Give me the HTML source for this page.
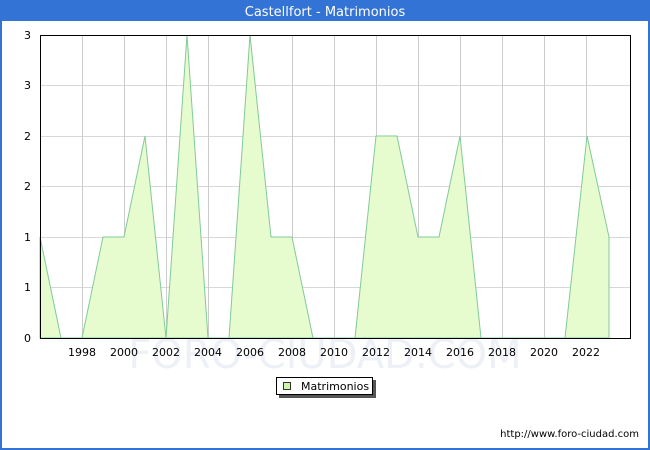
<!DOCTYPE html>
<html><head><meta charset="utf-8"><style>
html,body{margin:0;padding:0;width:650px;height:450px;overflow:hidden;background:#fff}
svg{display:block;font-family:"DejaVu Sans","Liberation Sans",sans-serif}
</style></head><body>
<svg width="650" height="450" viewBox="0 0 650 450" xmlns="http://www.w3.org/2000/svg">
<rect x="0" y="0" width="650" height="450" fill="#3373d5"/>
<rect x="2" y="21" width="646" height="427" fill="#fff"/>
<text x="325" y="16" fill="#fff" font-size="13" text-anchor="middle">Castellfort - Matrimonios</text>
<g stroke="#d8d8d8" stroke-width="1">
<line x1="40" y1="85.5" x2="630" y2="85.5"/>
<line x1="40" y1="136.5" x2="630" y2="136.5"/>
<line x1="40" y1="186.5" x2="630" y2="186.5"/>
<line x1="40" y1="237.5" x2="630" y2="237.5"/>
<line x1="40" y1="287.5" x2="630" y2="287.5"/>
</g>
<g stroke="#cccccc" stroke-width="1">
<line x1="82.5" y1="35" x2="82.5" y2="338"/><line x1="124.5" y1="35" x2="124.5" y2="338"/>
<line x1="166.5" y1="35" x2="166.5" y2="338"/><line x1="208.5" y1="35" x2="208.5" y2="338"/>
<line x1="250.5" y1="35" x2="250.5" y2="338"/><line x1="292.5" y1="35" x2="292.5" y2="338"/>
<line x1="334.5" y1="35" x2="334.5" y2="338"/><line x1="376.5" y1="35" x2="376.5" y2="338"/>
<line x1="418.5" y1="35" x2="418.5" y2="338"/><line x1="460.5" y1="35" x2="460.5" y2="338"/>
<line x1="502.5" y1="35" x2="502.5" y2="338"/><line x1="544.5" y1="35" x2="544.5" y2="338"/>
<line x1="586.5" y1="35" x2="586.5" y2="338"/>
</g>
<text x="325" y="368" fill="#eef0f8" font-size="40" text-anchor="middle">FORO-CIUDAD.COM</text>
<polygon fill="#e6fcce" stroke="#82c99a" stroke-width="1" points="40,338 40,237 61,338 82,338 103,237 124,237 145,136 166,338 187,35 208,338 229,338 250,35 271,237 292,237 313,338 334,338 355,338 376,136 397,136 418,237 439,237 460,136 481,338 502,338 523,338 544,338 565,338 587,136 609,237 609,338"/>
<rect x="40.5" y="35.5" width="590" height="303" fill="none" stroke="#000" stroke-width="1"/>
<g font-size="11" fill="#000" text-anchor="end">
<text x="31" y="39">3</text><text x="31" y="89">3</text><text x="31" y="140">2</text>
<text x="31" y="190">2</text><text x="31" y="241">1</text><text x="31" y="291">1</text><text x="31" y="342">0</text>
</g>
<g font-size="11" fill="#000" text-anchor="middle">
<text x="82" y="356">1998</text><text x="124" y="356">2000</text><text x="166" y="356">2002</text>
<text x="208" y="356">2004</text><text x="250" y="356">2006</text><text x="292" y="356">2008</text>
<text x="334" y="356">2010</text><text x="376" y="356">2012</text><text x="418" y="356">2014</text>
<text x="460" y="356">2016</text><text x="502" y="356">2018</text><text x="544" y="356">2020</text>
<text x="586" y="356">2022</text>
</g>
<rect x="279" y="380" width="97" height="18" fill="#555"/>
<rect x="276.5" y="377.5" width="96" height="17" fill="#fff" stroke="#000"/>
<rect x="283.5" y="382.5" width="7" height="7" fill="#ccf5a8" stroke="#333"/>
<text x="301" y="390" font-size="11">Matrimonios</text>
<text x="639" y="437" font-size="10" text-anchor="end">http://www.foro-ciudad.com</text>
</svg>
</body></html>
